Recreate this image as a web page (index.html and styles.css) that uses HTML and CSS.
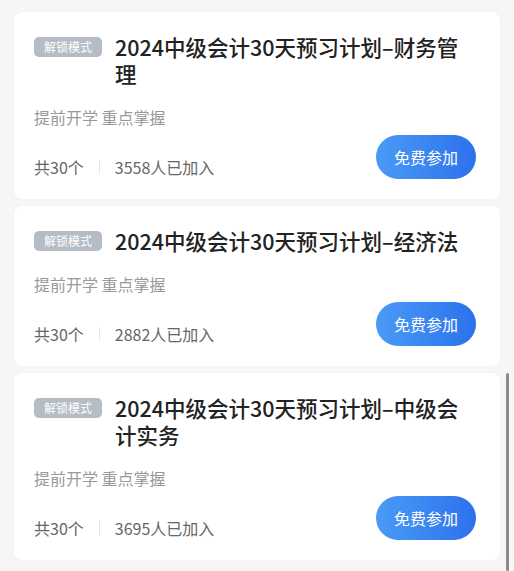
FILE: index.html
```html
<!DOCTYPE html>
<html lang="zh-CN">
<head>
<meta charset="utf-8">
<title>预习计划</title>
<link rel="stylesheet" href="styles.css">
</head>
<body>
<div class="list">
  <div class="card">
    <div class="head">
      <span class="badge">解锁模式</span>
      <h2 class="title">2024中级会计30天预习计划–财务管理</h2>
    </div>
    <p class="sub">提前开学 重点掌握</p>
    <div class="row">
      <div class="stats"><span>共30个</span><i class="sep"></i><span>3558人已加入</span></div>
      <button class="join">免费参加</button>
    </div>
  </div>
  <div class="card">
    <div class="head">
      <span class="badge">解锁模式</span>
      <h2 class="title">2024中级会计30天预习计划–经济法</h2>
    </div>
    <p class="sub">提前开学 重点掌握</p>
    <div class="row">
      <div class="stats"><span>共30个</span><i class="sep"></i><span>2882人已加入</span></div>
      <button class="join">免费参加</button>
    </div>
  </div>
  <div class="card">
    <div class="head">
      <span class="badge">解锁模式</span>
      <h2 class="title">2024中级会计30天预习计划–中级会计实务</h2>
    </div>
    <p class="sub">提前开学 重点掌握</p>
    <div class="row">
      <div class="stats"><span>共30个</span><i class="sep"></i><span>3695人已加入</span></div>
      <button class="join">免费参加</button>
    </div>
  </div>
</div>
<div class="scroll-thumb"></div>
</body>
</html>
```
FILE: styles.css
```css
html, body {
  margin: 0;
  padding: 0;
  background: #f6f6f7;
}
body {
  font-family: "Noto Sans CJK SC", "Noto Sans", "Liberation Sans", sans-serif;
  width: 514px;
  height: 571px;
  overflow: hidden;
  position: relative;
}
.list {
  display: flex;
  flex-direction: column;
  gap: 7px;
  padding: 12px 14px;
}
.card {
  background: #fff;
  border-radius: 8px;
  padding: 21px 24px 20px 20px;
  box-shadow: 0 0 3px rgba(0,0,0,0.03);
}
.head {
  display: flex;
  align-items: flex-start;
  gap: 13px;
}
.badge {
  flex: none;
  margin-top: 4px;
  height: 20px;
  line-height: 20px;
  padding: 0 10px;
  border-radius: 5px;
  background: #b4bcc5;
  color: #fff;
  font-size: 12px;
}
.title {
  margin: 0;
  padding-right: 8px;
  font-size: 21.5px;
  line-height: 27px;
  font-weight: 500;
  color: #222;
  flex: 1;
}
.sub {
  margin: 19px 0 0;
  font-size: 16px;
  line-height: 22px;
  color: #999;
}
.row {
  margin-top: 7px;
  display: flex;
  align-items: flex-end;
  justify-content: space-between;
}
.stats {
  display: flex;
  align-items: center;
  font-size: 16px;
  line-height: 24px;
  color: #666;
}
.sep {
  display: block;
  width: 1px;
  height: 14px;
  background: #e6e6e6;
  margin: 0 15px;
}
.join {
  width: 100px;
  height: 44px;
  border: none;
  border-radius: 22px;
  background: linear-gradient(90deg, #4a9bf6, #2c71ec);
  color: #fff;
  font-family: inherit;
  font-size: 16px;
  padding: 0;
}
.scroll-thumb {
  position: absolute;
  right: 5px;
  top: 373px;
  width: 3px;
  height: 198px;
  background: #8a8a8a;
  border-radius: 2px;
}
```
